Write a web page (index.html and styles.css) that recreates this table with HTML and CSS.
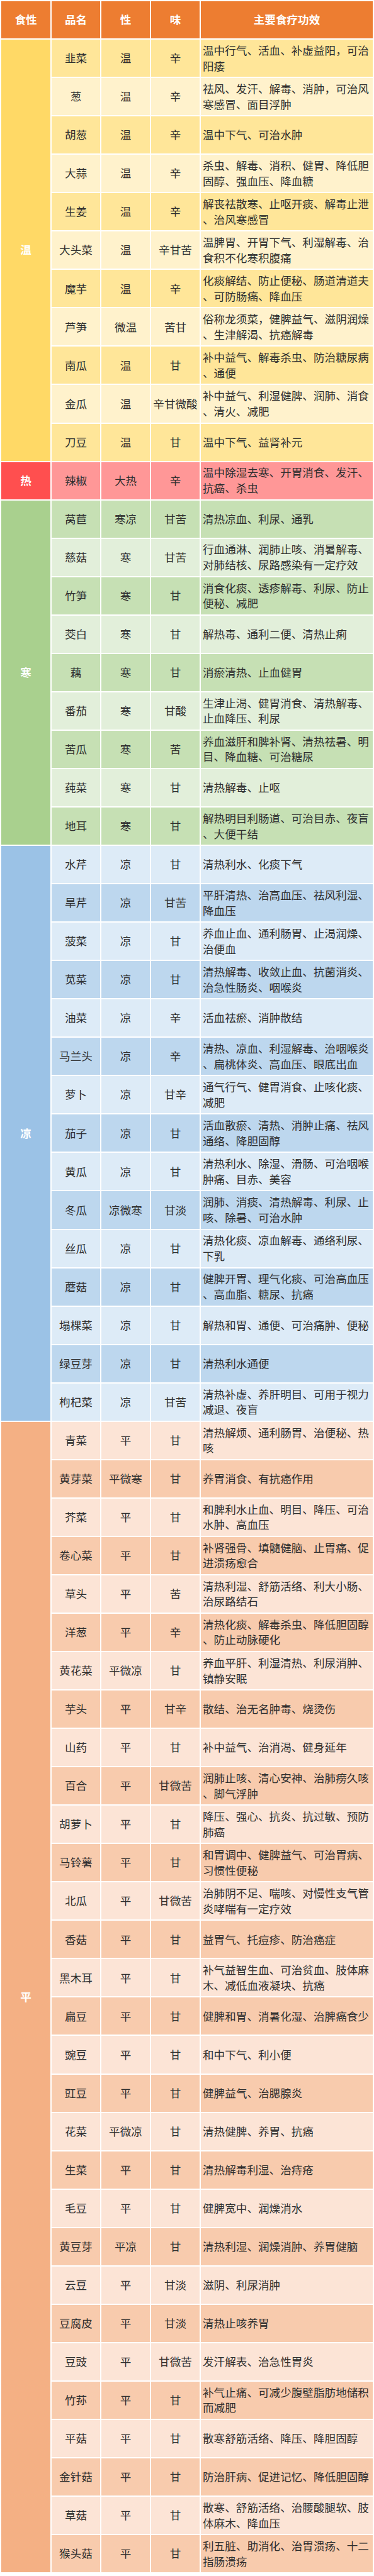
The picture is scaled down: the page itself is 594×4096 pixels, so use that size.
FILE: index.html
```html
<!DOCTYPE html>
<html lang="zh-CN">
<head>
<meta charset="utf-8">
<title>蔬菜食性表</title>
<link rel="stylesheet" href="styles.css">
</head>
<body>
<table class="veg">
  <colgroup>
    <col class="c-type"><col class="c-name"><col class="c-nat"><col class="c-taste"><col class="c-eff">
  </colgroup>
  <thead>
    <tr class="head"><th>食性</th><th>品名</th><th>性</th><th>味</th><th>主要食疗功效</th></tr>
  </thead>
  <tbody class="warm">
    <tr class="dk"><td class="grp" rowspan="11">温</td><td>韭菜</td><td>温</td><td>辛</td><td class="eff">温中行气、活血、补虚益阳，可治阳痿</td></tr>
    <tr class="lt"><td>葱</td><td>温</td><td>辛</td><td class="eff">祛风、发汗、解毒、消肿，可治风寒感冒、面目浮肿</td></tr>
    <tr class="dk"><td>胡葱</td><td>温</td><td>辛</td><td class="eff">温中下气、可治水肿</td></tr>
    <tr class="lt"><td>大蒜</td><td>温</td><td>辛</td><td class="eff">杀虫、解毒、消积、健胃、降低胆固醇、强血压、降血糖</td></tr>
    <tr class="dk"><td>生姜</td><td>温</td><td>辛</td><td class="eff">解丧祛散寒、止呕开痰、解毒止泄、治风寒感冒</td></tr>
    <tr class="lt"><td>大头菜</td><td>温</td><td>辛甘苦</td><td class="eff">温脾胃、开胃下气、利湿解毒、治食积不化寒积腹痛</td></tr>
    <tr class="dk"><td>魔芋</td><td>温</td><td>辛</td><td class="eff">化痰解结、防止便秘、肠道清道夫、可防肠癌、降血压</td></tr>
    <tr class="lt"><td>芦笋</td><td>微温</td><td>苦甘</td><td class="eff">俗称龙须菜，健脾益气、滋阴润燥、生津解渴、抗癌解毒</td></tr>
    <tr class="dk"><td>南瓜</td><td>温</td><td>甘</td><td class="eff">补中益气、解毒杀虫、防治糖尿病、通便</td></tr>
    <tr class="lt"><td>金瓜</td><td>温</td><td>辛甘微酸</td><td class="eff">补中益气、利湿健脾、润肺、消食、清火、减肥</td></tr>
    <tr class="dk"><td>刀豆</td><td>温</td><td>甘</td><td class="eff">温中下气、益肾补元</td></tr>
  </tbody>
  <tbody class="hot">
    <tr class="dk"><td class="grp">热</td><td>辣椒</td><td>大热</td><td>辛</td><td class="eff">温中除湿去寒、开胃消食、发汗、抗癌、杀虫</td></tr>
  </tbody>
  <tbody class="cold">
    <tr class="dk"><td class="grp" rowspan="9">寒</td><td>莴苣</td><td>寒凉</td><td>甘苦</td><td class="eff">清热凉血、利尿、通乳</td></tr>
    <tr class="lt"><td>慈菇</td><td>寒</td><td>甘苦</td><td class="eff">行血通淋、润肺止咳、消暑解毒、对肺结核、尿路感染有一定疗效</td></tr>
    <tr class="dk"><td>竹笋</td><td>寒</td><td>甘</td><td class="eff">消食化痰、透疹解毒、利尿、防止便秘、减肥</td></tr>
    <tr class="lt"><td>茭白</td><td>寒</td><td>甘</td><td class="eff">解热毒、通利二便、清热止痢</td></tr>
    <tr class="dk"><td>藕</td><td>寒</td><td>甘</td><td class="eff">消瘀清热、止血健胃</td></tr>
    <tr class="lt"><td>番茄</td><td>寒</td><td>甘酸</td><td class="eff">生津止渴、健胃消食、清热解毒、止血降压、利尿</td></tr>
    <tr class="dk"><td>苦瓜</td><td>寒</td><td>苦</td><td class="eff">养血滋肝和脾补肾、清热祛暑、明目、降血糖、可治糖尿</td></tr>
    <tr class="lt"><td>莼菜</td><td>寒</td><td>甘</td><td class="eff">清热解毒、止呕</td></tr>
    <tr class="dk"><td>地耳</td><td>寒</td><td>甘</td><td class="eff">解热明目利肠道、可治目赤、夜盲、大便干结</td></tr>
  </tbody>
  <tbody class="cool">
    <tr class="lt"><td class="grp" rowspan="15">凉</td><td>水芹</td><td>凉</td><td>甘</td><td class="eff">清热利水、化痰下气</td></tr>
    <tr class="dk"><td>旱芹</td><td>凉</td><td>甘苦</td><td class="eff">平肝清热、治高血压、祛风利湿、降血压</td></tr>
    <tr class="lt"><td>菠菜</td><td>凉</td><td>甘</td><td class="eff">养血止血、通利肠胃、止渴润燥、治便血</td></tr>
    <tr class="dk"><td>苋菜</td><td>凉</td><td>甘</td><td class="eff">清热解毒、收敛止血、抗菌消炎、治急性肠炎、咽喉炎</td></tr>
    <tr class="lt"><td>油菜</td><td>凉</td><td>辛</td><td class="eff">活血祛瘀、消肿散结</td></tr>
    <tr class="dk"><td>马兰头</td><td>凉</td><td>辛</td><td class="eff">清热、凉血、利湿解毒、治咽喉炎、扁桃体炎、高血压、眼底出血</td></tr>
    <tr class="lt"><td>萝卜</td><td>凉</td><td>甘辛</td><td class="eff">通气行气、健胃消食、止咳化痰、减肥</td></tr>
    <tr class="dk"><td>茄子</td><td>凉</td><td>甘</td><td class="eff">活血散瘀、清热、消肿止痛、祛风通络、降胆固醇</td></tr>
    <tr class="lt"><td>黄瓜</td><td>凉</td><td>甘</td><td class="eff">清热利水、除湿、滑肠、可治咽喉肿痛、目赤、美容</td></tr>
    <tr class="dk"><td>冬瓜</td><td>凉微寒</td><td>甘淡</td><td class="eff">润肺、消痰、清热解毒、利尿、止咳、除暑、可治水肿</td></tr>
    <tr class="lt"><td>丝瓜</td><td>凉</td><td>甘</td><td class="eff">清热化痰、凉血解毒、通络利尿、下乳</td></tr>
    <tr class="dk"><td>蘑菇</td><td>凉</td><td>甘</td><td class="eff">健脾开胃、理气化痰、可治高血压、高血脂、糖尿、抗癌</td></tr>
    <tr class="lt"><td>塌棵菜</td><td>凉</td><td>甘</td><td class="eff">解热和胃、通便、可治痛肿、便秘</td></tr>
    <tr class="dk"><td>绿豆芽</td><td>凉</td><td>甘</td><td class="eff">清热利水通便</td></tr>
    <tr class="lt"><td>枸杞菜</td><td>凉</td><td>甘苦</td><td class="eff">清热补虚、养肝明目、可用于视力减退、夜盲</td></tr>
  </tbody>
  <tbody class="mild">
    <tr class="lt"><td class="grp" rowspan="30">平</td><td>青菜</td><td>平</td><td>甘</td><td class="eff">清热解烦、通利肠胃、治便秘、热咳</td></tr>
    <tr class="dk"><td>黄芽菜</td><td>平微寒</td><td>甘</td><td class="eff">养胃消食、有抗癌作用</td></tr>
    <tr class="lt"><td>芥菜</td><td>平</td><td>甘</td><td class="eff">和脾利水止血、明目、降压、可治水肿、高血压</td></tr>
    <tr class="dk"><td>卷心菜</td><td>平</td><td>甘</td><td class="eff">补肾强骨、填髓健脑、止胃痛、促进溃疡愈合</td></tr>
    <tr class="lt"><td>草头</td><td>平</td><td>苦</td><td class="eff">清热利湿、舒筋活络、利大小肠、治尿路结石</td></tr>
    <tr class="dk"><td>洋葱</td><td>平</td><td>辛</td><td class="eff">清热化痰、解毒杀虫、降低胆固醇、防止动脉硬化</td></tr>
    <tr class="lt"><td>黄花菜</td><td>平微凉</td><td>甘</td><td class="eff">养血平肝、利湿清热、利尿消肿、镇静安眠</td></tr>
    <tr class="dk"><td>芋头</td><td>平</td><td>甘辛</td><td class="eff">散结、治无名肿毒、烧烫伤</td></tr>
    <tr class="lt"><td>山药</td><td>平</td><td>甘</td><td class="eff">补中益气、治消渴、健身延年</td></tr>
    <tr class="dk"><td>百合</td><td>平</td><td>甘微苦</td><td class="eff">润肺止咳、清心安神、治肺痨久咳、脚气浮肿</td></tr>
    <tr class="lt"><td>胡萝卜</td><td>平</td><td>甘</td><td class="eff">降压、强心、抗炎、抗过敏、预防肺癌</td></tr>
    <tr class="dk"><td>马铃薯</td><td>平</td><td>甘</td><td class="eff">和胃调中、健脾益气、可治胃病、习惯性便秘</td></tr>
    <tr class="lt"><td>北瓜</td><td>平</td><td>甘微苦</td><td class="eff">治肺阴不足、喘咳、对慢性支气管炎哮喘有一定疗效</td></tr>
    <tr class="dk"><td>香菇</td><td>平</td><td>甘</td><td class="eff">益胃气、托痘疹、防治癌症</td></tr>
    <tr class="lt"><td>黑木耳</td><td>平</td><td>甘</td><td class="eff">补气益智生血、可治贫血、肢体麻木、减低血液凝块、抗癌</td></tr>
    <tr class="dk"><td>扁豆</td><td>平</td><td>甘</td><td class="eff">健脾和胃、消暑化湿、治脾癌食少</td></tr>
    <tr class="lt"><td>豌豆</td><td>平</td><td>甘</td><td class="eff">和中下气、利小便</td></tr>
    <tr class="dk"><td>豇豆</td><td>平</td><td>甘</td><td class="eff">健脾益气、治腮腺炎</td></tr>
    <tr class="lt"><td>花菜</td><td>平微凉</td><td>甘</td><td class="eff">清热健脾、养胃、抗癌</td></tr>
    <tr class="dk"><td>生菜</td><td>平</td><td>甘</td><td class="eff">清热解毒利湿、治痔疮</td></tr>
    <tr class="lt"><td>毛豆</td><td>平</td><td>甘</td><td class="eff">健脾宽中、润燥消水</td></tr>
    <tr class="dk"><td>黄豆芽</td><td>平凉</td><td>甘</td><td class="eff">清热利湿、润燥消肿、养胃健脑</td></tr>
    <tr class="lt"><td>云豆</td><td>平</td><td>甘淡</td><td class="eff">滋阴、利尿消肿</td></tr>
    <tr class="dk"><td>豆腐皮</td><td>平</td><td>甘淡</td><td class="eff">清热止咳养胃</td></tr>
    <tr class="lt"><td>豆豉</td><td>平</td><td>甘微苦</td><td class="eff">发汗解表、治急性胃炎</td></tr>
    <tr class="dk"><td>竹荪</td><td>平</td><td>甘</td><td class="eff">补气止痛、可减少腹壁脂肪地储积而减肥</td></tr>
    <tr class="lt"><td>平菇</td><td>平</td><td>甘</td><td class="eff">散寒舒筋活络、降压、降胆固醇</td></tr>
    <tr class="dk"><td>金针菇</td><td>平</td><td>甘</td><td class="eff">防治肝病、促进记忆、降低胆固醇</td></tr>
    <tr class="lt"><td>草菇</td><td>平</td><td>甘</td><td class="eff">散寒、舒筋活络、治腰酸腿软、肢体麻木、降血压</td></tr>
    <tr class="dk"><td>猴头菇</td><td>平</td><td>甘</td><td class="eff">利五脏、助消化、治胃溃疡、十二指肠溃疡</td></tr>
  </tbody>
</table>
</body>
</html>
```
FILE: styles.css
```css
html, body {
  margin: 0;
  padding: 0;
  background: #ffffff;
}

.veg {
  width: 594px;
  table-layout: fixed;
  border-collapse: separate;
  border-spacing: 2px;
  font-family: "Noto Sans CJK SC", "Noto Sans", "Liberation Sans", sans-serif;
  font-size: 17.6px;
  line-height: 24.7px;
  color: #2e2e2e;
}

.c-type { width: 78px; }
.c-name { width: 77px; }
.c-nat { width: 77px; }
.c-taste { width: 77px; }
.c-eff { width: 273px; }

.veg tr { height: 59.06px; }

.veg th,
.veg td {
  padding: 0;
  text-align: center;
  vertical-align: middle;
  white-space: nowrap;
}

.veg td.eff {
  text-align: left;
  padding: 0 2px 0 3px;
  white-space: normal;
  line-break: anywhere;
  word-break: break-all;
}

.head th {
  background: #ed7d31;
  color: #ffffff;
  font-weight: 700;
}

.grp {
  color: #ffffff;
  font-weight: 700;
}

/* 温 */
.warm .grp { background: #ffd966; }
.warm .dk td { background: #ffe699; }
.warm .lt td { background: #fff2cc; }
.warm .dk td.grp, .warm .lt td.grp { background: #ffd966; }

/* 热 */
.hot td { background: #ff9797; }
.hot td.grp { background: #ff4f4f; }

/* 寒 */
.cold .dk td { background: #c6e0b4; }
.cold .lt td { background: #e2efda; }
.cold .dk td.grp, .cold .lt td.grp { background: #a9d08e; }

/* 凉 */
.cool .dk td { background: #bdd7ee; }
.cool .lt td { background: #ddebf7; }
.cool .dk td.grp, .cool .lt td.grp { background: #9bc2e6; }

/* 平 */
.mild .dk td { background: #f8cbad; }
.mild .lt td { background: #fce4d6; }
.mild .dk td.grp, .mild .lt td.grp { background: #f4b084; }
```
